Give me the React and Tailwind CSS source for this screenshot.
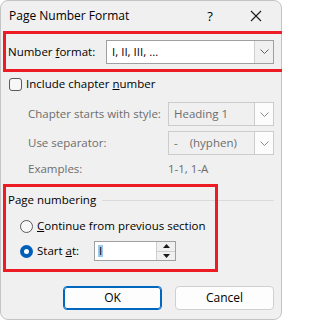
import React from "react";

const Chevron = ({ color = "#5f5f5f" }) => (
  <svg width="9" height="5" viewBox="0 0 9 5" fill="none">
    <path d="M0.5 0.5 L4.5 4.5 L8.5 0.5" stroke={color} strokeWidth="1" />
  </svg>
);

const Select = ({ value, width, disabled }) => (
  <div
    className={`flex h-[24px] ${width} items-stretch border ${
      disabled ? "border-[#cccccc] bg-[#f0f0f0] text-[#6d6d6d]" : "border-[#a0a0a0] bg-white text-black"
    }`}
  >
    <div className="flex flex-1 items-center pl-[5px] whitespace-pre">{value}</div>
    <div
      className={`flex w-[19px] items-center justify-center border-l ${
        disabled ? "border-[#cccccc] bg-[#fcfcfc]" : "border-[#cfcfcf] bg-[#f0f0f0]"
      }`}
    >
      <Chevron color={disabled ? "#8a8a8a" : "#5f5f5f"} />
    </div>
  </div>
);

const Radio = ({ checked }) =>
  checked ? (
    <div className="flex h-[13px] w-[13px] items-center justify-center rounded-full bg-[#005fb8]">
      <div className="h-[5px] w-[5px] rounded-full bg-white" />
    </div>
  ) : (
    <div className="h-[13px] w-[13px] rounded-full border border-[#5a5a5a] bg-[#f7f7f7]" />
  );

export default function App() {
  return (
    <div className="relative h-[320px] w-[282px] overflow-hidden bg-white font-['Open_Sans',sans-serif] text-[11.5px] leading-none text-black">
      <div className="h-[320px] w-[282px] rounded-lg border border-[#c4c4c4] bg-[#f0f0f0]">
        {/* title bar */}
        <div className="flex h-[30px] items-center">
          <span className="flex-1 pl-[8px] text-[12px]">Page Number Format</span>
          <div className="flex w-[46px] justify-center text-[13px]">?</div>
          <div className="mr-[2px] flex w-[46px] justify-center">
            <svg width="12" height="12" viewBox="0 0 12 12">
              <path d="M1 1 L11 11 M11 1 L1 11" stroke="#1a1a1a" strokeWidth="1.1" />
            </svg>
          </div>
        </div>

        {/* number format */}
        <div className="flex h-[41px] items-center pl-[7px] pr-[7px]">
          <span className="flex-1">
            Number <span className="underline">f</span>ormat:
          </span>
          <Select value="I, II, III, ..." width="w-[168px]" />
        </div>

        {/* include chapter number */}
        <div className="flex h-[24px] items-center gap-[4px] pl-[8px]">
          <div className="h-[13px] w-[13px] rounded-[3px] border border-[#5a5a5a] bg-[#f7f7f7]" />
          <span>
            Include chapter <span className="underline">n</span>umber
          </span>
        </div>

        <div className="flex flex-col gap-[5px] pl-[27px] pr-[7px] pt-[6px] text-[#6d6d6d]">
          <div className="flex items-center">
            <span className="flex-1">Chapter starts with style:</span>
            <Select value="Heading 1" width="w-[106px]" disabled />
          </div>
          <div className="flex items-center">
            <span className="flex-1">Use separator:</span>
            <Select value="-    (hyphen)" width="w-[106px]" disabled />
          </div>
          <div className="flex h-[18px] items-center">
            <span className="flex-1">Examples:</span>
            <span className="w-[106px]">1-1, 1-A</span>
          </div>
        </div>

        {/* page numbering */}
        <div className="mt-[12px] flex h-[20px] items-center pl-[7px] pr-[7px]">
          <span>Page numbering</span>
          <div className="ml-[6px] h-px flex-1 bg-[#dadada]" />
        </div>

        <div className="mt-[6px] flex h-[20px] items-center gap-[4px] pl-[19px]">
          <Radio />
          <span>
            <span className="underline">C</span>ontinue from previous section
          </span>
        </div>

        <div className="mt-[5px] flex h-[20px] items-center pl-[19px]">
          <Radio checked />
          <span className="ml-[4px] w-[57px]">
            Start <span className="underline">a</span>t:
          </span>
          <div className="flex h-[20px] w-[82px] border border-[#a0a0a0] bg-white">
            <div className="flex flex-1 items-center pl-[3px]">
              <span className="bg-[#99c9ef] px-px">I</span>
            </div>
            <div className="flex w-[19px] flex-col border-l border-[#cfcfcf] bg-[#f0f0f0]">
              <div className="flex flex-1 items-center justify-center border-b border-[#cfcfcf]">
                <svg width="7" height="4" viewBox="0 0 7 4">
                  <path d="M0 4 L3.5 0 L7 4 Z" fill="#1a1a1a" />
                </svg>
              </div>
              <div className="flex flex-1 items-center justify-center">
                <svg width="7" height="4" viewBox="0 0 7 4">
                  <path d="M0 0 L3.5 4 L7 0 Z" fill="#1a1a1a" />
                </svg>
              </div>
            </div>
          </div>
        </div>

        {/* buttons */}
        <div className="mt-[25px] flex justify-end gap-[13px] pr-[7px]">
          <button className="h-[24px] w-[99px] rounded-[4px] border border-[#0067c0] bg-[#fdfdfd] text-[12px] outline outline-1 -outline-offset-2 outline-[#0067c0]">
            OK
          </button>
          <button className="h-[24px] w-[99px] rounded-[4px] border border-[#d0d0d0] bg-[#fdfdfd] text-[12px]">
            Cancel
          </button>
        </div>
      </div>

      {/* red annotation boxes */}
      <div className="pointer-events-none absolute left-[3px] top-[31px] h-[41px] w-[279px] border-y-[3px] border-l-[3px] border-r-0 border-[#ed1c24]" />
      <div className="pointer-events-none absolute left-[3px] top-[184px] h-[88px] w-[215px] border-[3px] border-[#ed1c24]" />
    </div>
  );
}
